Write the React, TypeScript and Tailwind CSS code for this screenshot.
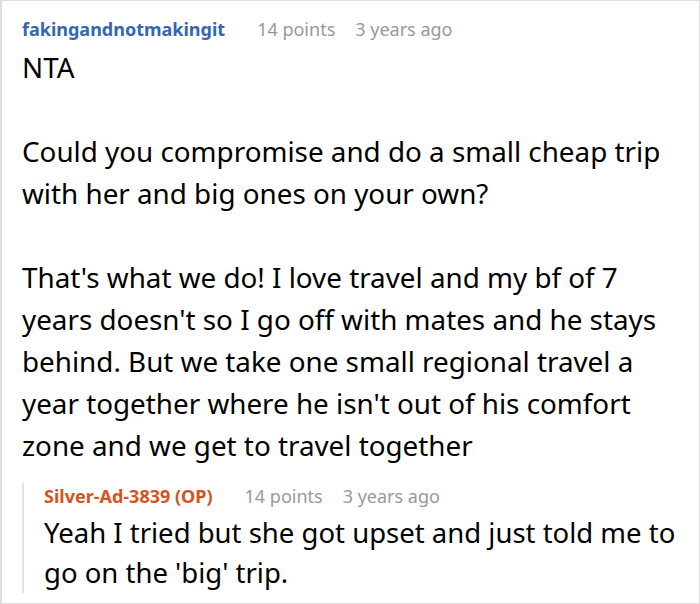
import React from 'react';

const body = "font-['Noto_Sans',sans-serif]";

export default function App() {
  return (
    <div className={`${body} w-[700px] h-[604px] bg-white border border-[#dedede] border-l-2 overflow-hidden`}>
      <div className="pl-[20px] pr-2 pt-[15px]">
        {/* comment header */}
        <div className="flex items-baseline text-[18px] leading-[26px]">
          <span className="font-bold text-[#3467b1]">fakingandnotmakingit</span>
          <span className="ml-8 text-[#999]">14 points</span>
          <span className="ml-5 text-[#999]">3 years ago</span>
        </div>

        <div className="mt-1 text-[27.8px] leading-[42px] text-black">
          <p>NTA</p>
          <p className="mt-[42px]">Could you compromise and do a small cheap trip with her and big ones on your own?</p>
          <p className="mt-[42px]">
            That's what we do! I love travel and my bf of 7 years doesn't so I go off with mates and he stays behind. But we take one small regional travel a year together where he isn't out of his comfort zone and we get to travel together
          </p>
        </div>

        {/* reply */}
        <div className="mt-[28px] border-l-2 border-[#e3e3e3] pl-[20px]">
          <div className="-mt-[11px] flex items-baseline text-[18px] leading-[26px]">
            <span className="font-bold text-[#d4541e]">Silver-Ad-3839 (OP)</span>
            <span className="ml-8 text-[#999]">14 points</span>
            <span className="ml-5 text-[#999]">3 years ago</span>
          </div>
          <p className="mt-1 text-[27.5px] leading-[40px] text-black">
            Yeah I tried but she got upset and just told me to go on the 'big' trip.
          </p>
        </div>
      </div>
    </div>
  );
}
